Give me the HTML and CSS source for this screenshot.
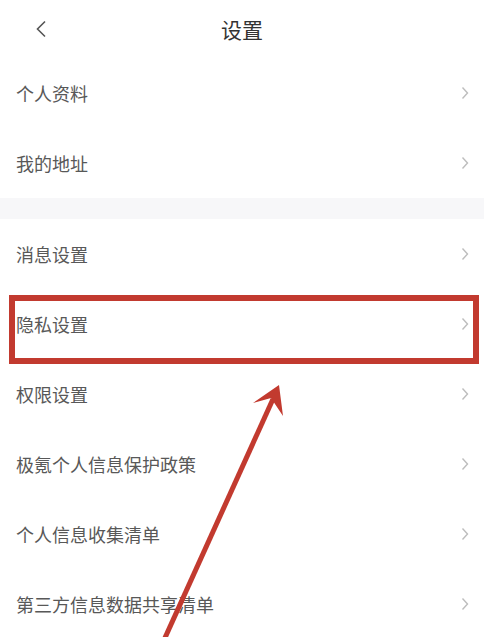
FILE: index.html
```html
<!DOCTYPE html>
<html lang="zh">
<head>
<meta charset="utf-8">
<link rel="stylesheet" href="styles.css">
</head>
<body>
<div class="page">
  <header class="topbar">
    <svg class="back" width="12" height="18" viewBox="0 0 12 18"><path d="M10 1.5 L2.5 9 L10 16.5" fill="none" stroke="#555" stroke-width="1.6"/></svg>
    <h1 class="title">设置</h1>
  </header>
  <section class="group">
    <div class="row"><span>个人资料</span><svg class="chev" width="8" height="14" viewBox="0 0 8 14"><path d="M1.5 1.5 L6.5 7 L1.5 12.5" fill="none" stroke="#bdbdbd" stroke-width="1.4"/></svg></div>
    <div class="row"><span>我的地址</span><svg class="chev" width="8" height="14" viewBox="0 0 8 14"><path d="M1.5 1.5 L6.5 7 L1.5 12.5" fill="none" stroke="#bdbdbd" stroke-width="1.4"/></svg></div>
  </section>
  <div class="gap"></div>
  <section class="group">
    <div class="row"><span>消息设置</span><svg class="chev" width="8" height="14" viewBox="0 0 8 14"><path d="M1.5 1.5 L6.5 7 L1.5 12.5" fill="none" stroke="#bdbdbd" stroke-width="1.4"/></svg></div>
    <div class="row"><span>隐私设置</span><svg class="chev" width="8" height="14" viewBox="0 0 8 14"><path d="M1.5 1.5 L6.5 7 L1.5 12.5" fill="none" stroke="#bdbdbd" stroke-width="1.4"/></svg></div>
    <div class="row"><span>权限设置</span><svg class="chev" width="8" height="14" viewBox="0 0 8 14"><path d="M1.5 1.5 L6.5 7 L1.5 12.5" fill="none" stroke="#bdbdbd" stroke-width="1.4"/></svg></div>
    <div class="row"><span>极氪个人信息保护政策</span><svg class="chev" width="8" height="14" viewBox="0 0 8 14"><path d="M1.5 1.5 L6.5 7 L1.5 12.5" fill="none" stroke="#bdbdbd" stroke-width="1.4"/></svg></div>
    <div class="row"><span>个人信息收集清单</span><svg class="chev" width="8" height="14" viewBox="0 0 8 14"><path d="M1.5 1.5 L6.5 7 L1.5 12.5" fill="none" stroke="#bdbdbd" stroke-width="1.4"/></svg></div>
    <div class="row"><span>第三方信息数据共享清单</span><svg class="chev" width="8" height="14" viewBox="0 0 8 14"><path d="M1.5 1.5 L6.5 7 L1.5 12.5" fill="none" stroke="#bdbdbd" stroke-width="1.4"/></svg></div>
  </section>
  <div class="highlight"></div>
  <svg class="arrow" width="484" height="637" viewBox="0 0 484 637">
    <line x1="164" y1="640" x2="273" y2="399" stroke="#c23a2f" stroke-width="5"/>
    <polygon points="279,385 253,403 271,398 283,416" fill="#c23a2f"/>
  </svg>
</div>
</body>
</html>
```
FILE: styles.css
```css
html, body {
  margin: 0;
  padding: 0;
  background: #ffffff;
}
.page {
  position: relative;
  width: 484px;
  height: 637px;
  overflow: hidden;
  font-family: "Noto Sans CJK SC", "Noto Sans", sans-serif;
}
.topbar {
  height: 58px;
  display: flex;
  align-items: center;
  justify-content: center;
  position: relative;
}
.back {
  position: absolute;
  left: 35px;
  top: 20px;
}
.title {
  margin: 0;
  font-size: 21px;
  font-weight: 400;
  color: #333;
  line-height: 1;
}
.group {
  display: flex;
  flex-direction: column;
}
.row {
  height: 70px;
  display: flex;
  align-items: center;
  justify-content: space-between;
  padding: 0 15px 0 16px;
  font-size: 18px;
  color: #585858;
}
.gap {
  height: 21px;
  background: #f7f7f9;
}
.highlight {
  position: absolute;
  left: 9px;
  top: 295px;
  width: 470px;
  height: 69px;
  box-sizing: border-box;
  border: 6px solid #c23a2f;
}
.arrow {
  position: absolute;
  left: 0;
  top: 0;
}
```
